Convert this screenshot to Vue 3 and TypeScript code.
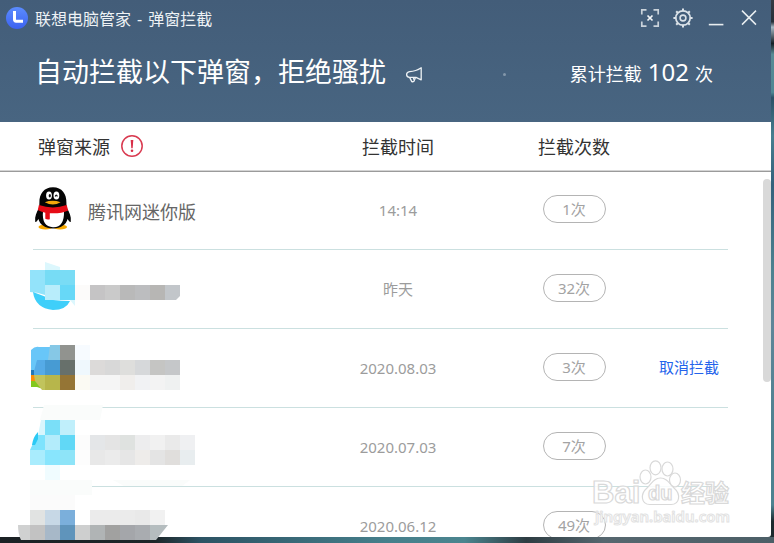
<script setup lang="ts">
interface Row {
  name: string
  time: string
  count: number
  penguin?: boolean
  action?: string
}

interface Strip {
  x: number
  y: number
  colors: string[]
}

const rows: Row[] = [
  { name: '腾讯网迷你版', time: '14:14', count: 1, penguin: true },
  { name: '', time: '昨天', count: 32 },
  { name: '', time: '2020.08.03', count: 3, action: '取消拦截' },
  { name: '', time: '2020.07.03', count: 7 },
  { name: '', time: '2020.06.12', count: 49 },
]

// Pixelated cells that hide icons and names; every cell is 15 x 15.
const CELL = 15
const strips: Strip[] = [
  { x: 45, y: 270, colors: ['#77dcf5', '#79dcf5'] },
  { x: 45, y: 285, colors: ['#b8edfb', '#67d8f7', '#fcfbfa', '#c5c4c5', '#cacaca', '#b9b9b9', '#bcbdbf', '#b7b6b4'] },
  { x: 60, y: 345, colors: ['#91938f', '#f7fbff'] },
  { x: 45, y: 360, colors: ['#479bd3', '#67706b', '#eff8fd', '#dcdad9', '#d8d8d8', '#dededc', '#d6d8da', '#c5c5c3', '#c5c7c9'] },
  { x: 45, y: 375, colors: ['#b7b64b', '#957535', '#fbfaf3', '#f5f5f5', '#f5f5f5', '#f0eeec', '#f1f2f4', '#f3f3f3', '#eff1f1'] },
  { x: 45, y: 420, colors: ['#7adff8', '#c0effb'] },
  { x: 45, y: 435, colors: ['#b3ecfb', '#61d8f6', '#fcfcfc', '#e4e6e8', '#e4e4e4', '#dfe2e0', '#ededee', '#f1f1f1', '#eaeaea', '#eff0f2'] },
  { x: 30, y: 450, colors: ['#a9ecfd', '#88e5fd', '#8ee4f8', '#fdfdfd', '#e8e8e8', '#ebebeb', '#e6e6e6', '#eeecea', '#e4e4e4', '#e0dedc', '#e8edef'] },
  { x: 45, y: 465, colors: ['#f0fcff'] },
  { x: 30, y: 495, colors: ['#fbfbfb', '#fbfbfb', '#fbfbfb'] },
  { x: 30, y: 510, colors: ['#e1e3e2', '#c7d8e6', '#7bafdb', '#ffffff', '#ebebeb', '#ebebeb', '#ebebeb', '#e9e9e9', '#f1f1f1'] },
  { x: 30, y: 525, colors: ['#c2c2c2', '#a7b8c8', '#5f94bb', '#cecfcf', '#b0b4b5', '#a1a1a0', '#a4a6aa', '#a9acb0'] },
]
</script>

<template>
  <div class="desktop">
    <main class="window">
      <header class="banner">
        <div class="titlebar">
          <svg class="logo" width="22" height="22" viewBox="0 0 22 22" aria-hidden="true">
            <defs>
              <linearGradient id="logoFill" x1="0" y1="0" x2="0" y2="1">
                <stop offset="0" stop-color="#5b8cff" />
                <stop offset="1" stop-color="#3c62f0" />
              </linearGradient>
            </defs>
            <circle cx="11" cy="11" r="11" fill="url(#logoFill)" />
            <path d="M8.5 4v8.6q0 1.6 1.6 1.6H17" fill="none" stroke="#fff" stroke-width="3" />
          </svg>
          <div class="app-name"><span>联想电脑管家</span><span>-</span><span>弹窗拦截</span></div>
          <div class="controls">
            <button type="button" aria-label="截图">
              <svg width="20" height="20" viewBox="0 0 20 20">
                <path d="M1.8 6.5V1.8H6.5M13.5 1.8h4.7v4.7M18.2 13.5v4.7h-4.7M6.5 18.2H1.8v-4.7" fill="none" stroke="#c9d2da" stroke-width="1.7" />
                <path d="M7.5 7.5l5 5M12.5 7.5l-5 5" stroke="#f2f5f7" stroke-width="1.7" />
              </svg>
            </button>
            <button type="button" aria-label="设置">
              <svg width="20" height="20" viewBox="0 0 20 20" fill="none" stroke="#dbe2e8">
                <circle cx="10" cy="10" r="7.2" stroke-width="1.7" />
                <circle cx="10" cy="10" r="2.9" stroke-width="1.6" />
                <path d="M10 .4v2.8M10 16.8v2.8M.4 10h2.8M16.8 10h2.8M3.2 3.2l2 2M14.8 14.8l2 2M3.2 16.8l2-2M14.8 5.2l2-2" stroke-width="2" />
              </svg>
            </button>
            <button type="button" aria-label="最小化">
              <svg width="20" height="20" viewBox="0 0 20 20"><path d="M2.8 16.6h14.6" stroke="#e8edf0" stroke-width="1.6" /></svg>
            </button>
            <button type="button" aria-label="关闭">
              <svg width="20" height="20" viewBox="0 0 20 20"><path d="M3 2.6l14 14M17 2.6L3 16.6" stroke="#e8edf0" stroke-width="1.5" /></svg>
            </button>
          </div>
        </div>
        <div class="summary">
          <h1>自动拦截以下弹窗，拒绝骚扰</h1>
          <svg class="horn" width="18" height="18" viewBox="0 0 18 18" fill="none" stroke="#eef2f5" stroke-width="1.3" stroke-linejoin="round" aria-hidden="true">
            <path d="M16.2 1.8v12L11 11.4H4.6Q1.6 11.2 1.6 8.6T4.6 5.6Q11 5.4 16.2 1.8Z" />
            <path d="M4.6 11.4l2.2 4.2q1.8.6 2.6-.8L8.2 11.4M10.4 11.6l-.6 2" />
          </svg>
          <span class="dot"></span>
          <p class="total"><span>累计拦截</span><strong>102</strong><span>次</span></p>
        </div>
      </header>

      <section class="list">
        <table>
          <thead>
            <tr>
              <th scope="col" class="source">
                弹窗来源
                <svg width="24" height="24" viewBox="0 0 24 24" aria-hidden="true">
                  <circle cx="12" cy="11" r="10.2" fill="none" stroke="#d93a50" stroke-width="1.5" />
                  <path d="M10.7 5h2.6l-.6 8.2h-1.4z" fill="#d92f48" />
                  <circle cx="12" cy="15.8" r="1.3" fill="#d92f48" />
                </svg>
              </th>
              <th scope="col">拦截时间</th>
              <th scope="col">拦截次数</th>
              <td></td>
            </tr>
          </thead>
          <tbody>
            <tr v-for="row in rows" :key="row.time">
              <td class="source">
                <svg v-if="row.penguin" width="38" height="44" viewBox="0 0 38 44" aria-hidden="true">
                  <ellipse cx="11.5" cy="40" rx="7" ry="2.5" fill="#f6a800" />
                  <ellipse cx="26" cy="40" rx="7" ry="2.5" fill="#f6a800" />
                  <path d="M19 .2C10 .2 5.2 7 5.4 15.5L5.2 21C2.5 25 .6 29.5 1.2 34.5c.2 1.2 1.6.4 3.2-2.4C6 38 11 41.4 19 41.4S32 38 33.6 32.1c1.6 2.8 3 3.6 3.2 2.4.6-5-1.3-9.5-4.2-13.5L32.4 15.5C32.6 7 28 .2 19 .2Z" fill="#050505" />
                  <path d="M9 24Q7.5 39.8 19 40.2T30 24Z" fill="#fff" />
                  <ellipse cx="15" cy="8.4" rx="2.9" ry="4" fill="#fff" />
                  <ellipse cx="22.4" cy="8.4" rx="2.9" ry="4" fill="#fff" />
                  <ellipse cx="15.8" cy="8.8" rx="1.1" ry="1.8" fill="#111" />
                  <path d="M21.2 9.4q1-2.4 2.2 0" fill="none" stroke="#111" stroke-width="1.2" />
                  <path d="M10.8 15.2Q18.5 12.3 26.6 15.2 19 19.6 10.8 15.2Z" fill="#f5a70b" />
                  <path d="M4.9 18Q19 22.8 32.7 18l1.5 5.4Q27 26.8 15.8 26.2v6.1q-2.6.6-4.5-.5v-6.1Q6.5 24.8 3.8 23Z" fill="#e60b16" />
                </svg>
                <span>{{ row.name }}</span>
              </td>
              <td class="time">{{ row.time }}</td>
              <td class="count"><span class="pill">{{ row.count }}次</span></td>
              <td class="action"><button v-if="row.action" type="button" class="cancel">{{ row.action }}</button></td>
            </tr>
          </tbody>
        </table>
        <div class="scroll-thumb"></div>
      </section>
    </main>

    <svg class="mosaic" width="210" height="543" viewBox="0 0 210 543" aria-hidden="true">
      <path d="M45 262l15 5v3H45zM75 300v6l-5-6z" fill="#dcf7fd" />
      <path d="M30 270h15v25q-8-3-15-3z" fill="#93e3fa" />
      <path d="M33 292q11 4 20 8 8 1 17 1-4 9-17 9-18-2-20-18Z" fill="#3fcffa" />
      <path d="M45 298q8 3 15 1v1H45z" fill="#fff" />
      <path d="M165 285h15v11l-4 4h-11z" fill="#c2c6ca" />
      <path d="M31 350q4-4 8-3h11v15l-5 8v5H31Z" fill="#68c6f8" />
      <path d="M50 345h10v15H48z" fill="#86c8e6" />
      <path d="M37 360h8v15H33z" fill="#55abe7" />
      <path d="M31 370h3v5h-3z" fill="#2178b8" />
      <path d="M31 375h4v6h-4z" fill="#fa8c0a" />
      <path d="M31 381h6l6 8-6-2h-6z" fill="#83c81e" />
      <path d="M34 375h11v15h-3l-7-9z" fill="#c1c45c" />
      <path d="M44 405h59l-3 15H40zM30 480h62v15H30zM113 480h77l-8 6h-58z" fill="#fafcfb" />
      <path d="M41 420h4v15h-7z" fill="#d8f6fd" />
      <path d="M37 435h8v15H30z" fill="#7ee3fd" />
      <path d="M38 432q-5 5-6 13h3l3-6z" fill="#2bcaf5" />
      <g shape-rendering="crispEdges">
        <template v-for="strip in strips" :key="`${strip.x}-${strip.y}`">
          <rect
            v-for="(color, i) in strip.colors"
            :key="i"
            :x="strip.x + i * CELL"
            :y="strip.y"
            :width="CELL"
            :height="CELL"
            :fill="color"
          />
        </template>
      </g>
      <path d="M18 525h12v15h-9q-3-6-3-15z" fill="#d0d1d1" />
      <path d="M150 525h18l-12 15h-6z" fill="#b5bdbf" />
    </svg>

    <svg class="watermark" width="150" height="74" viewBox="0 0 150 74" aria-hidden="true">
      <g fill="#fff" fill-opacity=".85" stroke="#d9d9d9" stroke-width="1.2">
        <text class="latin" x="4" y="43" font-size="31">Bai</text>
        <path d="M72.500 18c-7 0-9 6-13.500 10-7 6-6 16.500 3 16.500h21c9 0 10-10.500 3-16.500-4.500-4-6.500-10-13.500-10Z" />
        <ellipse cx="57.500" cy="17" rx="5.500" ry="7" />
        <ellipse cx="67.500" cy="7.800" rx="5.500" ry="7" />
        <ellipse cx="79.500" cy="9" rx="5.500" ry="7" />
        <ellipse cx="87" cy="20" rx="5.500" ry="7" />
        <text class="latin" x="60" y="40" font-size="20">du</text>
        <text class="han" x="93" y="42" font-size="24">经验</text>
        <text class="url" x="7" y="62" font-size="15">jingyan.baidu.com</text>
      </g>
    </svg>
  </div>
</template>

<style>
body {
  margin: 0;
}
</style>

<style scoped>
.desktop {
  position: relative;
  box-sizing: border-box;
  height: 100vh;
  padding: 0 3px 6px 0;
  display: flex;
  overflow: hidden;
  font-family: "Noto Sans", "Noto Sans CJK SC", sans-serif;
  background:
    linear-gradient(90deg, #1b2124 0%, #1d2629 20%, #2c5364 26%, #467f8b 50%, #4b858f 60%, #2d3c42 68%, #56676f 78%, #4c5f67 100%) bottom / 100% 6px no-repeat,
    linear-gradient(180deg, #343b45 0%, #26303a 4%, #a6b8c4 5%, #152027 8%, #588b95 10%, #4f8794 17%, #2b5066 18%, #477f90 25%, #34617c 34%, #4d8290 50%, #5f8599 60%, #4d8290 80%, #4d8290 93%, #1d2a2e 96%);
}

.window {
  flex: 1;
  display: flex;
  flex-direction: column;
  min-width: 0;
  overflow: hidden;
  background: #fff;
  border-radius: 0 0 3px 0;
}

.banner {
  flex: none;
  color: #fff;
  background: linear-gradient(180deg, #435d79, #486581);
}

.titlebar {
  display: flex;
  align-items: center;
  height: 36px;
  padding: 0 6px;
}

.app-name {
  display: flex;
  gap: 6px;
  margin-left: 7px;
  padding-top: 2px;
  color: #eef2f5;
  font-size: 16px;
  line-height: 24px;
}

.controls {
  display: flex;
  margin-left: auto;
}

.controls button {
  display: flex;
  align-items: center;
  justify-content: center;
  width: 33px;
  height: 34px;
  padding: 0;
  border: 0;
  background: none;
}

.summary {
  display: flex;
  align-items: center;
  height: 72px;
  padding: 0 58px 14px 35px;
}

h1 {
  margin: 0;
  font-size: 27px;
  line-height: 40px;
  font-weight: 400;
  white-space: nowrap;
}

.horn {
  margin-left: 19px;
  padding-top: 5px;
}

.dot {
  width: 3px;
  height: 3px;
  margin: 4px 0 0 80px;
  border-radius: 2px;
  background: #8397aa;
}

.total {
  display: flex;
  align-items: baseline;
  gap: 6px;
  margin: 2px 0 0 auto;
  font-size: 18px;
  line-height: 32px;
}

.total strong {
  font-size: 24px;
  font-weight: 400;
}

.list {
  position: relative;
  flex: 1;
  min-height: 0;
  overflow: hidden;
}

table,
tbody {
  display: block;
}

thead {
  display: block;
  position: relative;
  border-bottom: 1px solid #d4d4d4;
  box-shadow: 0 1px 0 #9b9b9b;
}

tr {
  display: grid;
  grid-template-columns: 265fr 200fr 152fr 78fr;
  align-items: center;
  margin: 0 43px 0 33px;
}

thead tr {
  height: 48px;
}

tbody tr {
  height: 78px;
  border-bottom: 1px solid #cbe0e0;
}

th,
td {
  padding: 0;
  text-align: center;
  font-weight: 400;
}

th {
  color: #333;
  font-size: 18px;
  line-height: 26px;
  padding-top: 2px;
}

.source {
  display: flex;
  align-items: center;
}

th.source {
  gap: 10px;
  padding-left: 5px;
}

td.source {
  gap: 16px;
  padding-left: 1px;
  color: #666;
  font-size: 18px;
  line-height: 26px;
}

td.source svg {
  padding-bottom: 2px;
}

td.source span {
  padding-top: 4px;
}

td.time {
  color: #9c9c9c;
  font-size: 15px;
  line-height: 22px;
}

td.count {
  display: flex;
  justify-content: center;
  padding-bottom: 2px;
}

.pill {
  box-sizing: border-box;
  width: 63px;
  height: 28px;
  border: 1px solid #b4b4b4;
  border-radius: 14px;
  color: #a3a3a3;
  font-size: 15px;
  line-height: 27px;
}

td.action {
  display: flex;
  justify-content: center;
  padding-bottom: 3px;
}

.cancel {
  padding: 0;
  border: 0;
  background: none;
  color: #2463eb;
  font-family: inherit;
  font-size: 15px;
  line-height: 22px;
  white-space: nowrap;
}

.scroll-thumb {
  position: absolute;
  top: 57px;
  right: 0;
  width: 8px;
  height: 203px;
  border-radius: 4px;
  background: #d9d9d9;
}

.mosaic {
  position: absolute;
  top: 0;
  left: 0;
  pointer-events: none;
}

.watermark {
  position: absolute;
  right: 36px;
  bottom: 9px;
  pointer-events: none;
}

.latin {
  font-family: "Liberation Sans", sans-serif;
  font-weight: 700;
}

.han {
  font-family: "Noto Sans CJK SC", sans-serif;
  font-weight: 700;
}

.url {
  font-family: "Noto Sans", sans-serif;
  font-weight: 600;
  stroke: #e2e2e2;
  stroke-width: 1px;
}
</style>
